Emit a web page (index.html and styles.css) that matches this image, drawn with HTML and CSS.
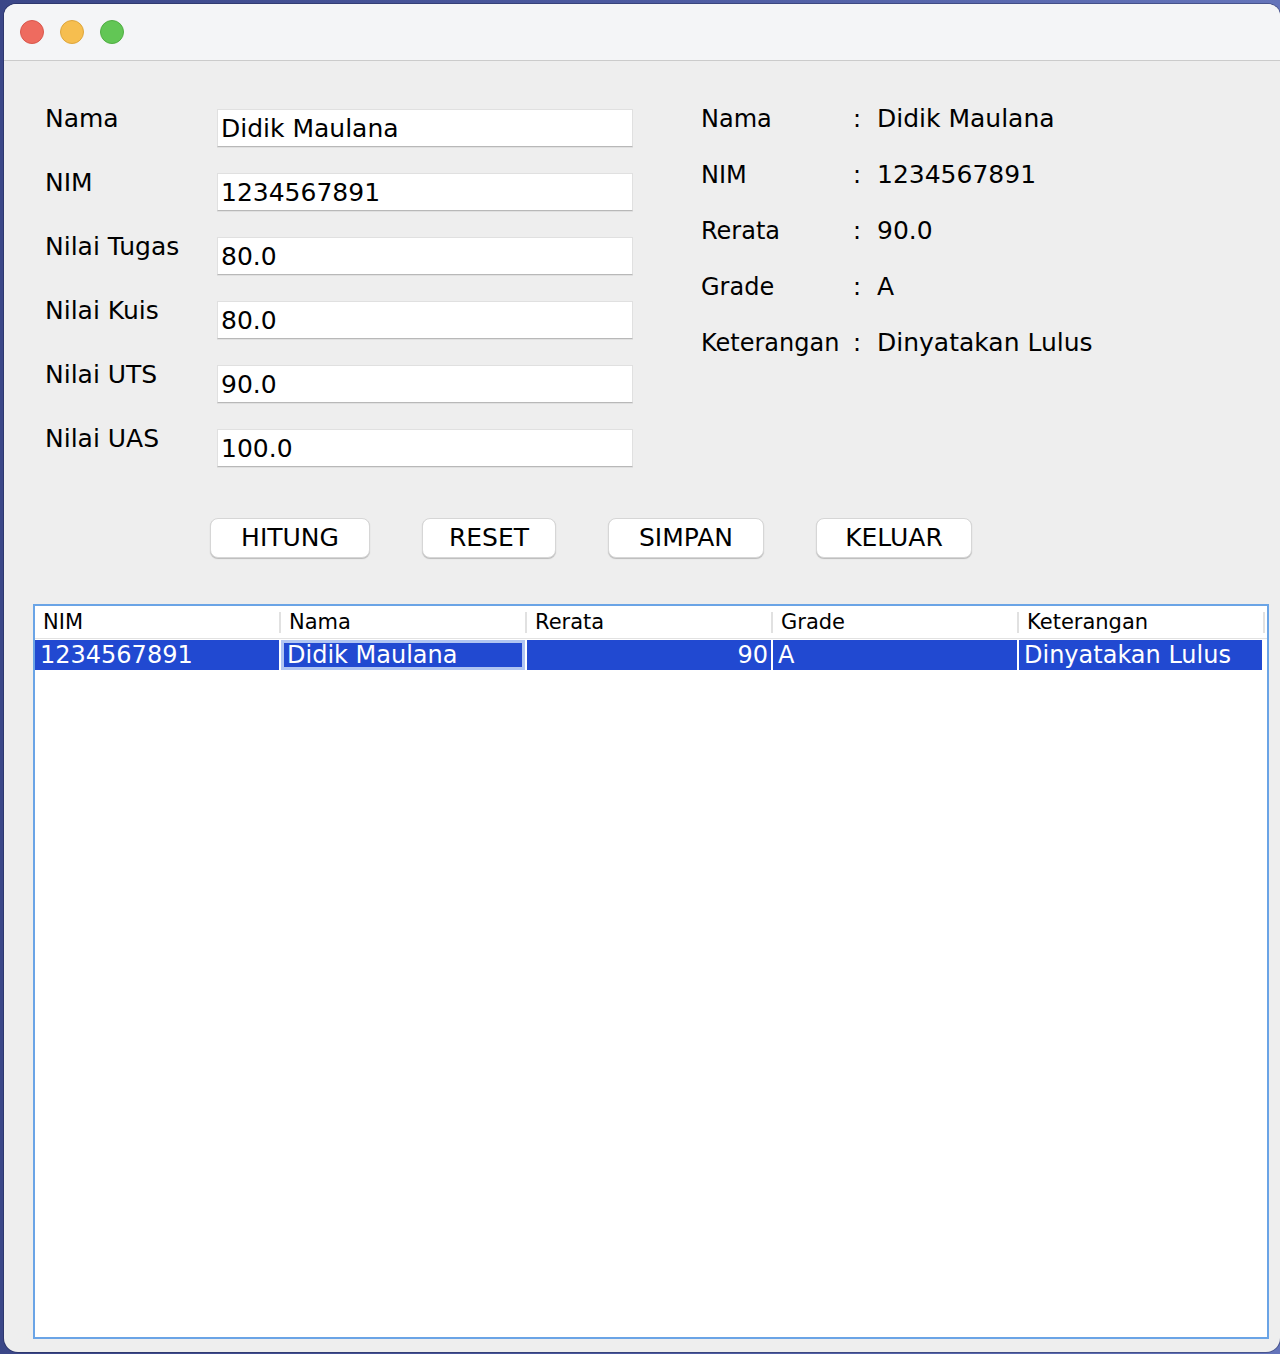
FILE: index.html
```html
<!DOCTYPE html>
<html lang="id">
<head>
<meta charset="utf-8">
<title>Nilai Mahasiswa</title>
<link rel="stylesheet" href="styles.css">
</head>
<body>
<div class="window">
  <div class="titlebar">
    <span class="light light-close"></span>
    <span class="light light-min"></span>
    <span class="light light-max"></span>
  </div>
  <div class="content">
    <div class="top">
      <div class="form">
        <div class="label">Nama</div><div class="field">Didik Maulana</div>
        <div class="label">NIM</div><div class="field">1234567891</div>
        <div class="label">Nilai Tugas</div><div class="field">80.0</div>
        <div class="label">Nilai Kuis</div><div class="field">80.0</div>
        <div class="label">Nilai UTS</div><div class="field">90.0</div>
        <div class="label">Nilai UAS</div><div class="field">100.0</div>
      </div>
      <div class="summary">
        <div class="s-label">Nama</div><div class="s-colon">:</div><div class="s-value">Didik Maulana</div>
        <div class="s-label">NIM</div><div class="s-colon">:</div><div class="s-value">1234567891</div>
        <div class="s-label">Rerata</div><div class="s-colon">:</div><div class="s-value">90.0</div>
        <div class="s-label">Grade</div><div class="s-colon">:</div><div class="s-value">A</div>
        <div class="s-label">Keterangan</div><div class="s-colon">:</div><div class="s-value">Dinyatakan Lulus</div>
      </div>
    </div>
    <div class="actions">
      <button class="btn btn-hitung">HITUNG</button>
      <button class="btn btn-reset">RESET</button>
      <button class="btn btn-simpan">SIMPAN</button>
      <button class="btn btn-keluar">KELUAR</button>
    </div>
    <div class="table">
      <div class="thead">
        <div class="th">NIM</div>
        <div class="th">Nama</div>
        <div class="th">Rerata</div>
        <div class="th">Grade</div>
        <div class="th">Keterangan</div>
      </div>
      <div class="tr selected">
        <div class="td">1234567891</div>
        <div class="td td-focus">Didik Maulana</div>
        <div class="td td-num">90</div>
        <div class="td">A</div>
        <div class="td">Dinyatakan Lulus</div>
      </div>
    </div>
  </div>
</div>
</body>
</html>
```
FILE: styles.css
```css
* { box-sizing: border-box; }
html, body { margin: 0; padding: 0; }
body {
  width: 1280px;
  height: 1354px;
  overflow: hidden;
  background: linear-gradient(90deg, #3b4788 0%, #4c5aa0 50%, #6474ba 100%);
  font-family: "DejaVu Sans", "Liberation Sans", sans-serif;
  color: #111;
}
.window {
  margin: 4px 0 0 4px;
  width: 1276px;
  height: 1348px;
  border-radius: 12px 12px 14px 14px;
  overflow: hidden;
  background: #eeeeee;
  box-shadow: 0 0 0 1px rgba(20, 25, 60, 0.35);
}
.titlebar {
  height: 57px;
  background: #f4f5f7;
  border-bottom: 1px solid #cbcbcb;
  display: flex;
  align-items: center;
  gap: 16px;
  padding: 0 0 1px 16px;
}
.light {
  width: 24px;
  height: 24px;
  border-radius: 50%;
  display: block;
}
.light-close { background: #ee6b5f; border: 1px solid #d9574c; }
.light-min { background: #f6be4f; border: 1px solid #dea63c; }
.light-max { background: #62c655; border: 1px solid #50ae43; }

.content {
  padding: 44px 11px 0 29px;
}
.top {
  display: flex;
  padding-left: 12px;
}
.form {
  display: grid;
  grid-template-columns: 172px 416px;
  row-gap: 22px;
  align-items: start;
}
.label {
  font-size: 25px;
  line-height: 28px;
  white-space: nowrap;
  color: #000;
}
.field {
  margin-top: 4px;
  height: 38px;
  background: #fff;
  border: 1px solid #e0e0e0;
  border-bottom-color: #b8b8b8;
  box-shadow: 0 1px 0 rgba(0, 0, 0, 0.06);
  padding: 4px 3px 0 3px;
  font-size: 25px;
  line-height: 30px;
  color: #000;
  white-space: nowrap;
}
.summary {
  margin-left: 68px;
  display: grid;
  grid-template-columns: 152px 24px auto;
  row-gap: 28px;
  align-content: start;
  line-height: 28px;
  color: #000;
}
.s-label { font-size: 24px; white-space: nowrap; }
.s-colon { font-size: 24px; }
.s-value { font-size: 25px; white-space: nowrap; }

.actions {
  display: flex;
  gap: 52px;
  margin: 51px 0 0 177px;
}
.btn {
  height: 40px;
  padding: 0;
  background: #fff;
  border: 1px solid #d6d6d6;
  border-radius: 8px;
  box-shadow: 0 1px 1px rgba(0, 0, 0, 0.22);
  font-family: "DejaVu Sans", "Liberation Sans", sans-serif;
  font-size: 25px;
  line-height: 38px;
  color: #000;
  text-align: center;
}
.btn-hitung { width: 160px; }
.btn-reset { width: 134px; }
.btn-simpan { width: 156px; }
.btn-keluar { width: 156px; }

.table {
  margin-top: 46px;
  height: 735px;
  background: #fff;
  border: 2px solid #6aa4e6;
}
.thead {
  display: flex;
  height: 33px;
  border-bottom: 1px solid #e2e2e2;
}
.th {
  width: 246px;
  padding: 1px 0 0 8px;
  font-size: 21px;
  line-height: 31px;
  color: #000;
  background-image: linear-gradient(#e1e1e1, #e1e1e1);
  background-repeat: no-repeat;
  background-size: 2px 21px;
  background-position: right center;
}
.tr {
  display: flex;
  margin-top: 1px;
  height: 30px;
}
.td {
  width: 246px;
  background: #2149d1;
  border-right: 2px solid #fff;
  padding: 1px 5px 0;
  font-size: 24px;
  line-height: 29px;
  color: #fff;
  white-space: nowrap;
  overflow: hidden;
}
.td:last-child { width: 245px; }
.td-focus {
  box-shadow: inset 0 0 0 3px #b0c5f2;
  padding-left: 6px;
}
.td-num {
  text-align: right;
  padding-right: 3px;
}
```
